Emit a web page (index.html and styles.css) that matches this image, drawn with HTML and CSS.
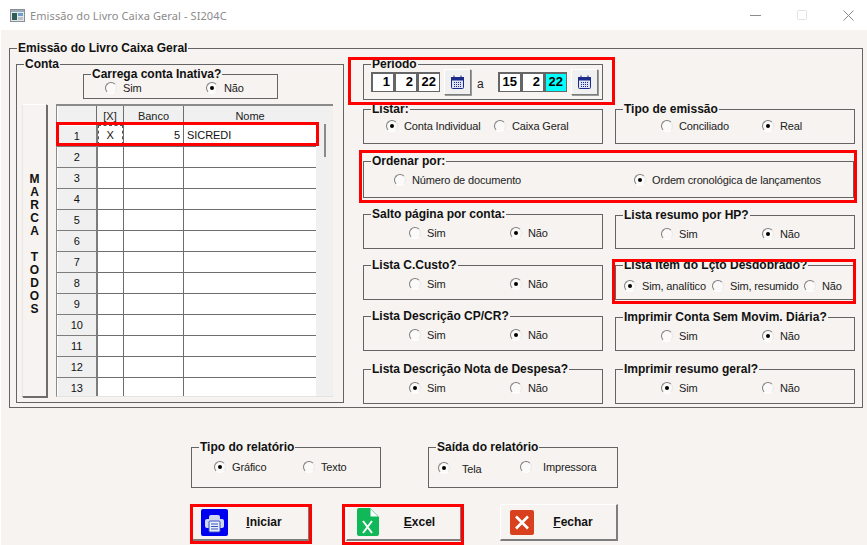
FILE: index.html
```html
<!DOCTYPE html>
<html lang="pt-BR">
<head>
<meta charset="utf-8">
<title>Emissão do Livro Caixa Geral - SI204C</title>
<link rel="stylesheet" href="styles.css">
</head>
<body>
<div class="window">
  <header class="titlebar">
    <svg class="appicon" width="15" height="13" viewBox="0 0 15 13"><rect x="0.5" y="0.5" width="14" height="12" fill="#e4e8ea" stroke="#8a8f94"/><rect x="1" y="1" width="13" height="2" fill="#9ab"/><rect x="2" y="4" width="5" height="7" fill="#2f5d5a"/><rect x="8" y="4" width="5" height="3" fill="#6f9fc7"/><rect x="8" y="8" width="5" height="3" fill="#b9c2c8"/></svg>
    <span class="titletext">Emissão do Livro Caixa Geral - SI204C</span>
    <div class="winctrls">
      <svg width="11" height="11" viewBox="0 0 11 11"><path d="M0 5.5H11" stroke="#8c8c8c"/></svg>
      <svg width="10" height="10" viewBox="0 0 10 10"><rect x="0.5" y="0.5" width="9" height="9" rx="1" fill="none" stroke="#e2e2e2"/></svg>
      <svg width="11" height="11" viewBox="0 0 11 11"><path d="M0.5 0.5L10.5 10.5M10.5 0.5L0.5 10.5" stroke="#8c8c8c"/></svg>
    </div>
  </header>

  <main class="content">
    <fieldset class="group outer">
      <legend>Emissão do Livro Caixa Geral</legend>
      <div class="outer-body">
        <fieldset class="group conta">
          <legend>Conta</legend>
          <fieldset class="group inativa">
            <legend>Carrega conta Inativa?</legend>
            <div class="opts o-inativa">
              <label class="opt"><span class="radio"></span>Sim</label>
              <label class="opt"><span class="radio on"></span>Não</label>
            </div>
          </fieldset>
          <div class="conta-grid">
            <button class="marca">M<br>A<br>R<br>C<br>A<br><br>T<br>O<br>D<br>O<br>S</button>
            <div class="gridbox">
              <table class="grid">
                <thead><tr><th class="rh"></th><th class="cx">[X]</th><th class="cb">Banco</th><th class="cn">Nome</th></tr></thead>
                <tbody>
                  <tr><th class="rh">1</th><td class="x-cell"><span class="focus">X</span></td><td class="num">5</td><td>SICREDI</td></tr>
                  <tr><th class="rh">2</th><td></td><td></td><td></td></tr>
                  <tr><th class="rh">3</th><td></td><td></td><td></td></tr>
                  <tr><th class="rh">4</th><td></td><td></td><td></td></tr>
                  <tr><th class="rh">5</th><td></td><td></td><td></td></tr>
                  <tr><th class="rh">6</th><td></td><td></td><td></td></tr>
                  <tr><th class="rh">7</th><td></td><td></td><td></td></tr>
                  <tr><th class="rh">8</th><td></td><td></td><td></td></tr>
                  <tr><th class="rh">9</th><td></td><td></td><td></td></tr>
                  <tr><th class="rh">10</th><td></td><td></td><td></td></tr>
                  <tr><th class="rh">11</th><td></td><td></td><td></td></tr>
                  <tr><th class="rh">12</th><td></td><td></td><td></td></tr>
                  <tr><th class="rh">13</th><td></td><td></td><td></td></tr>
                </tbody>
              </table>
              <div class="scrolltrack"><span class="thumb"></span></div>
            </div>
          </div>
        </fieldset>

        <div class="options">
          <fieldset class="group periodo">
            <legend>Período</legend>
            <div class="dates">
              <span class="datef"><span class="df">1</span><span class="df">2</span><span class="df">22</span></span>
              <button class="calbtn"><svg width="13" height="14" viewBox="0 0 13 14"><use href="#cal"/></svg></button>
              <span class="date-a">a</span>
              <span class="datef"><span class="df">15</span><span class="df">2</span><span class="df sel">22</span></span>
              <button class="calbtn"><svg width="13" height="14" viewBox="0 0 13 14"><use href="#cal"/></svg></button>
            </div>
          </fieldset>
          <div class="spacer"></div>

          <fieldset class="group">
            <legend>Listar:</legend>
            <div class="opts o-listar">
              <label class="opt"><span class="radio on"></span>Conta Individual</label>
              <label class="opt"><span class="radio"></span>Caixa Geral</label>
            </div>
          </fieldset>
          <fieldset class="group">
            <legend>Tipo de emissão</legend>
            <div class="opts o-std o-tight">
              <label class="opt"><span class="radio"></span>Conciliado</label>
              <label class="opt"><span class="radio on"></span>Real</label>
            </div>
          </fieldset>

          <fieldset class="group wide">
            <legend>Ordenar por:</legend>
            <div class="opts o-ordenar">
              <label class="opt"><span class="radio"></span>Número de documento</label>
              <label class="opt"><span class="radio on"></span>Ordem cronológica de lançamentos</label>
            </div>
          </fieldset>

          <fieldset class="group">
            <legend>Salto página por conta:</legend>
            <div class="opts o-std">
              <label class="opt"><span class="radio"></span>Sim</label>
              <label class="opt"><span class="radio on"></span>Não</label>
            </div>
          </fieldset>
          <fieldset class="group shift">
            <legend>Lista resumo por HP?</legend>
            <div class="opts o-std">
              <label class="opt"><span class="radio"></span>Sim</label>
              <label class="opt"><span class="radio on"></span>Não</label>
            </div>
          </fieldset>

          <fieldset class="group">
            <legend>Lista C.Custo?</legend>
            <div class="opts o-std">
              <label class="opt"><span class="radio"></span>Sim</label>
              <label class="opt"><span class="radio on"></span>Não</label>
            </div>
          </fieldset>
          <fieldset class="group">
            <legend>Lista Item do Lçto Desdobrado?</legend>
            <div class="opts o-item">
              <label class="opt"><span class="radio on"></span>Sim, analítico</label>
              <label class="opt"><span class="radio"></span>Sim, resumido</label>
              <label class="opt"><span class="radio"></span>Não</label>
            </div>
          </fieldset>

          <fieldset class="group">
            <legend>Lista Descrição CP/CR?</legend>
            <div class="opts o-std">
              <label class="opt"><span class="radio"></span>Sim</label>
              <label class="opt"><span class="radio on"></span>Não</label>
            </div>
          </fieldset>
          <fieldset class="group shift">
            <legend>Imprimir Conta Sem Movim. Diária?</legend>
            <div class="opts o-std">
              <label class="opt"><span class="radio"></span>Sim</label>
              <label class="opt"><span class="radio on"></span>Não</label>
            </div>
          </fieldset>

          <fieldset class="group">
            <legend>Lista Descrição Nota de Despesa?</legend>
            <div class="opts o-std">
              <label class="opt"><span class="radio on"></span>Sim</label>
              <label class="opt"><span class="radio"></span>Não</label>
            </div>
          </fieldset>
          <fieldset class="group">
            <legend>Imprimir resumo geral?</legend>
            <div class="opts o-std">
              <label class="opt"><span class="radio on"></span>Sim</label>
              <label class="opt"><span class="radio"></span>Não</label>
            </div>
          </fieldset>
        </div>
      </div>
    </fieldset>

    <div class="report-row">
      <fieldset class="group report">
        <legend>Tipo do relatório</legend>
        <div class="opts o-tipo">
          <label class="opt"><span class="radio on"></span>Gráfico</label>
          <label class="opt"><span class="radio"></span>Texto</label>
        </div>
      </fieldset>
      <fieldset class="group report">
        <legend>Saída do relatório</legend>
        <div class="opts o-saida">
          <label class="opt opt-low"><span class="radio on"></span>Tela</label>
          <label class="opt"><span class="radio"></span>Impressora</label>
        </div>
      </fieldset>
    </div>

    <div class="actions">
      <button class="action a-iniciar">
        <svg class="ico" width="27" height="27" viewBox="0 0 27 27"><rect width="27" height="27" rx="2" fill="#0000f0"/><path d="M8 8a2 2 0 0 1 2-2h7a2 2 0 0 1 2 2v2H8z" fill="#cfd8ea"/><rect x="4" y="10" width="19" height="9" rx="2" fill="#cfd8ea"/><rect x="8" y="12" width="11" height="11" rx="1" fill="#e8edf6" stroke="#3a55c8"/><path d="M10 15h7M10 17.500h7M10 20h7" stroke="#3a55c8"/></svg>
        <span class="a-label"><u>I</u>niciar</span>
      </button>
      <button class="action a-excel">
        <svg class="ico" width="22" height="28" viewBox="0 0 22 28"><path d="M2 0h11l9 9v17a2 2 0 0 1-2 2H2a2 2 0 0 1-2-2V2a2 2 0 0 1 2-2z" fill="#10b858"/><path d="M13.500 1v7.500H21z" fill="#fff"/><path d="M6 13l9 12M15 13L6 25" stroke="#fff" stroke-width="2" fill="none"/></svg>
        <span class="a-label"><u>E</u>xcel</span>
      </button>
      <button class="action a-fechar">
        <svg class="ico" width="24" height="25" viewBox="0 0 24 25"><rect width="24" height="25" rx="2" fill="#d9411e"/><path d="M6 6.500l12 12M18 6.500l-12 12" stroke="#fff" stroke-width="2.600"/></svg>
        <span class="a-label"><u>F</u>echar</span>
      </button>
    </div>
  </main>

  <div class="mark m-periodo"></div>
  <div class="mark m-row"></div>
  <div class="mark m-ordenar"></div>
  <div class="mark m-item"></div>
  <div class="mark m-iniciar"></div>
  <div class="mark m-excel"></div>

  <svg class="defs" width="0" height="0"><defs>
    <g id="cal"><rect x="0.5" y="2.500" width="12" height="11" rx="1" fill="#dfe4f4" stroke="#1c2a8c"/><rect x="0" y="2" width="13" height="3.500" fill="#1c2a8c"/><path d="M3 0.500v3M10 0.500v3" stroke="#1c2a8c"/><path d="M3 7.500h7M3 9.500h7M3 11.500h7" stroke="#1c2a8c" stroke-dasharray="1 1"/></g>
  </defs></svg>
</div>
</body>
</html>
```

FILE: styles.css
```css
* { box-sizing: border-box; }
html, body { margin: 0; height: 100%; overflow: hidden; background: #fff; }
body { font-family: "Liberation Sans", Arial, sans-serif; font-size: 11px; color: #111; }

.window { position: relative; width: 867px; height: 545px; display: flex; flex-direction: column; }

/* title bar */
.titlebar { height: 30px; flex: none; display: flex; align-items: center; padding-left: 10px; background: #fff; }
.appicon { margin-right: 5px; }
.titletext { font-family: "Noto Sans", sans-serif; font-size: 11px; color: #8b8b8b; letter-spacing: 0.1px; }
.winctrls { margin-left: auto; display: flex; align-items: center; gap: 36px; padding-right: 13px; }

/* main area */
.content { flex: 1; margin-left: 1px; background: #f6f3f0; padding: 11px 4px 0 8px; }

.group { margin: 0; padding: 0; min-width: 0; border: 1px solid #646464; height: 42px; }
.group > legend { margin-left: 7px; padding: 0 1px; font-size: 12px; line-height: 14px; height: 14px; font-weight: 700; white-space: nowrap; color: #111; }

.outer { width: 854px; height: 367px; }
.outer-body { display: flex; padding: 2px 0 0 6px; }

.conta { width: 328px; height: 346px; flex: none; }
.inativa { width: 195px; height: 32px; margin: -4px 0 0 66px; }

.conta-grid { display: flex; gap: 9px; padding: 5px 0 0 5px; }
.marca { width: 25px; height: 293px; flex: none; padding: 0 0 13px; background: #f6f3f0; border: 1px solid; border-color: #fff #6d6d6d #6d6d6d #e6e6e6; box-shadow: 1px 1px 0 #6d6d6d; font: 700 12px/13px "Liberation Sans", sans-serif; color: #111; }

.gridbox { position: relative; width: 277px; height: 293px; overflow: hidden; border-top: 2px solid #8a8a8a; border-left: 1px solid #8a8a8a; border-bottom: 1px solid #e3e3e3; background: #fff; }
.grid { border-collapse: collapse; table-layout: fixed; width: 259px; font-size: 11px; letter-spacing: -0.05px; }
.grid th, .grid td { height: 21px; padding: 0; border-right: 1px solid #6d6d6d; border-bottom: 1px solid #6d6d6d; font-weight: 400; }
.grid thead th { height: 19px; background: #f0f0f0; font-weight: 400; text-align: center; color: #222; border-bottom: none; border-right-width: 1px; }
.rh { width: 39px; }
.cx { width: 27px; }
.cb { width: 60px; }
.cn { width: 133px; }
.grid tbody .rh { background: #f0f0f0; text-align: center; border-top: 1px solid #fff; border-left: 1px solid #fff; border-right: 2px solid #7d7d7d; border-bottom: 1px solid #7d7d7d; }
.grid td { background: #fff; padding: 0 3px; white-space: nowrap; }
.grid .num { text-align: right; }
.grid .x-cell { padding: 0; text-align: center; }
.focus { display: block; height: 20px; line-height: 19px; border: 1px dashed #555; }
.scrolltrack { position: absolute; top: 0; right: 0; width: 17px; bottom: 0; background: #f0f0f0; }
.thumb { display: block; position: absolute; left: 8px; top: 18px; width: 2px; height: 33px; background: #8a8a8a; }

/* option grid */
.options { margin-left: 19px; width: 492px; display: grid; grid-template-columns: 240px 240px; column-gap: 12px; grid-template-rows: 45px 52px 53px 51px 51px 53px 43px; }
.periodo { height: 43px; }
.wide { grid-column: 1 / 3; margin-right: 1px; height: 44px; }
.shift { margin-top: 1px; height: 41px; }
.spacer { visibility: hidden; }

.opts { display: flex; height: 14px; margin-top: 5px; }
.opt { display: flex; align-items: center; flex: none; white-space: nowrap; font-size: 11px; letter-spacing: -0.15px; color: #222; }
.radio { width: 12px; height: 12px; flex: none; margin-right: 6px; border-radius: 50%; background: #fbfaf9; border: 1px solid; border-color: #7d7d7d #e8e8e8 #fff #7d7d7d; position: relative; }
.radio.on::after { content: ""; position: absolute; left: 3px; top: 3px; width: 4px; height: 4px; border-radius: 50%; background: #000; }

.o-std { padding-left: 45px; }
.o-std .opt { width: 101px; }
.o-tight, .o-listar { margin-top: 3px; }
.o-listar { padding-left: 22px; }
.o-listar .opt { width: 108px; }
.o-ordenar { padding-left: 30px; }
.o-ordenar .opt { width: 240px; }
.o-item { margin-top: 7px; padding-left: 8px; }
.o-item .opt:nth-child(1) { width: 88px; }
.o-item .opt:nth-child(2) { width: 92px; }
.o-inativa { margin-top: 0; padding-left: 21px; }
.o-inativa .opt { width: 101px; }
.o-tipo { margin-top: 6px; padding-left: 22px; }
.o-tipo .opt { width: 89px; }
.o-saida { margin-top: 6px; padding-left: 9px; }
.o-saida .opt:first-child { width: 82px; }
.opt-low { padding-top: 3px; }
.o-saida .opt-low .radio { margin-top: -1px; margin-right: 12px; }
.o-saida .opt:last-child .radio { margin-right: 11px; }

/* dates */
.dates { display: flex; align-items: center; height: 26px; padding-left: 7px; margin-top: -2px; }
.datef { display: flex; height: 20px; }
.df { width: 23px; height: 20px; background: #fff; border: 1px solid #666; border-top-width: 2px; border-left-width: 2px; font-size: 13px; font-weight: 700; line-height: 15px; text-align: right; padding-right: 3px; color: #000; }
.df.sel { background: #00ffff; }
.calbtn { width: 27px; height: 26px; margin-left: 4px; padding: 0; display: flex; align-items: center; justify-content: center; background: #f0f0f0; border: 1px solid; border-color: #fff #7d7d7d #7d7d7d #fff; box-shadow: 1px 1px 0 #9a9a9a; }
.date-a { width: 27px; padding-left: 6px; padding-top: 4px; font-size: 12px; color: #222; flex: none; }
.defs { position: absolute; }

/* bottom */
.report-row { display: flex; gap: 47px; margin: 32px 0 0 182px; }
.report { width: 190px; height: 48px; }
.actions { display: flex; margin: 16px 0 0 183px; }
.action { height: 37px; padding: 0; display: flex; align-items: center; background: #f6f3f0; border: 1px solid; border-color: #fff #7d7d7d #7d7d7d #fff; border-bottom-width: 2px; border-right-width: 2px; font: 700 12px "Liberation Sans", sans-serif; color: #111; }
.a-label { flex: 1; text-align: center; }
.ico { flex: none; }
.a-iniciar { width: 118px; padding-left: 8px; padding-right: 8px; }
.a-excel { width: 116px; margin-left: 36px; padding-left: 10px; padding-right: 0; }
.a-fechar { width: 118px; margin-left: 38px; padding-left: 9px; padding-right: 4px; }

/* red annotation frames drawn over the form */
.mark { position: absolute; border: 3px solid #f00; pointer-events: none; }
.m-periodo { left: 348px; top: 57px; width: 267px; height: 48px; }
.m-row { left: 56px; top: 122px; width: 263px; height: 24px; }
.m-ordenar { left: 359px; top: 150px; width: 498px; height: 53px; }
.m-item { left: 612px; top: 259px; width: 244px; height: 45px; }
.m-iniciar { left: 190px; top: 504px; width: 122px; height: 40px; }
.m-excel { left: 342px; top: 504px; width: 122px; height: 41px; }
```
